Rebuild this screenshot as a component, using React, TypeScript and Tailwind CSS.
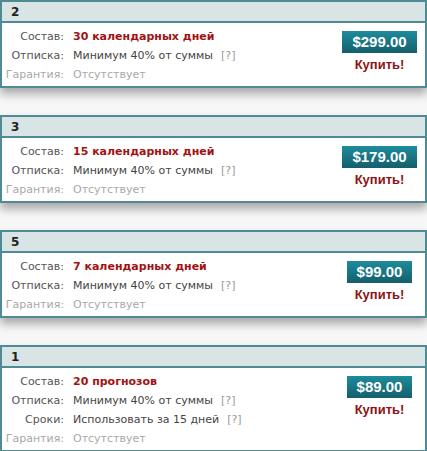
const plans = [
  {
    id: 2,
    sostav: "30 календарных дней",
    price: "$299.00",
  },
  {
    id: 3,
    sostav: "15 календарных дней",
    price: "$179.00",
  },
  {
    id: 5,
    sostav: "7 календарных дней",
    price: "$99.00",
  },
  {
    id: 1,
    sostav: "20 прогнозов",
    price: "$89.00",
    sroki: "Использовать за 15 дней",
  },
];

function Row({
  label,
  children,
  muted,
}: {
  label: string;
  children: React.ReactNode;
  muted?: boolean;
}) {
  return (
    <div className="flex h-[19px] items-center">
      <div
        className={
          "w-[62px] shrink-0 text-right " +
          (muted ? "text-[#a8a8a8]" : "text-[#555555]")
        }
      >
        {label}
      </div>
      <div className={"pl-[9px] " + (muted ? "text-[#a8a8a8]" : "text-[#444444]")}>
        {children}
      </div>
    </div>
  );
}

function Hint() {
  return <span className="ml-[8px] text-[#999999]">[?]</span>;
}

export default function App() {
  return (
    <div
      className="min-h-[451px] w-[427px] overflow-hidden bg-[#f7f7f7] text-[11px]"
      style={{ fontFamily: '"DejaVu Sans", Verdana, sans-serif' }}
    >
      <div className="flex flex-col gap-[27px]">
        {plans.map((p) => (
          <div
            key={p.id}
            className="border-2 border-[#4f8b94] bg-white shadow-[0_6px_9px_rgba(0,0,0,0.32)]"
          >
            <div className="flex h-[21px] items-center border-b-2 border-[#4f8b94] bg-[#d9e4e5] pl-[9px] text-[12px] font-bold text-[#222222]">
              {p.id}
            </div>
            <div className="flex pb-[1px] pt-[5px]">
              <div className="flex-1">
                <Row label="Состав:">
                  <span className="font-bold text-[#a31212]">{p.sostav}</span>
                </Row>
                <Row label="Отписка:">
                  Минимум 40% от суммы
                  <Hint />
                </Row>
                {p.sroki && (
                  <Row label="Сроки:">
                    {p.sroki}
                    <Hint />
                  </Row>
                )}
                <Row label="Гарантия:" muted>
                  Отсутствует
                </Row>
              </div>
              <div className="flex w-[91px] shrink-0 flex-col items-center pt-[3px]">
                <div
                  className="flex h-[22px] items-center bg-gradient-to-b from-[#1d8c9c] to-[#155f6c] px-[10px] text-[15px] font-bold text-white"
                  style={{ fontFamily: '"Liberation Sans", Arial, sans-serif' }}
                >
                  {p.price}
                </div>
                <div
                  className="mt-[2px] text-[13px] font-bold text-[#8e1414]"
                  style={{ fontFamily: '"Liberation Sans", Arial, sans-serif' }}
                >
                  Купить!
                </div>
              </div>
            </div>
          </div>
        ))}
      </div>
    </div>
  );
}
